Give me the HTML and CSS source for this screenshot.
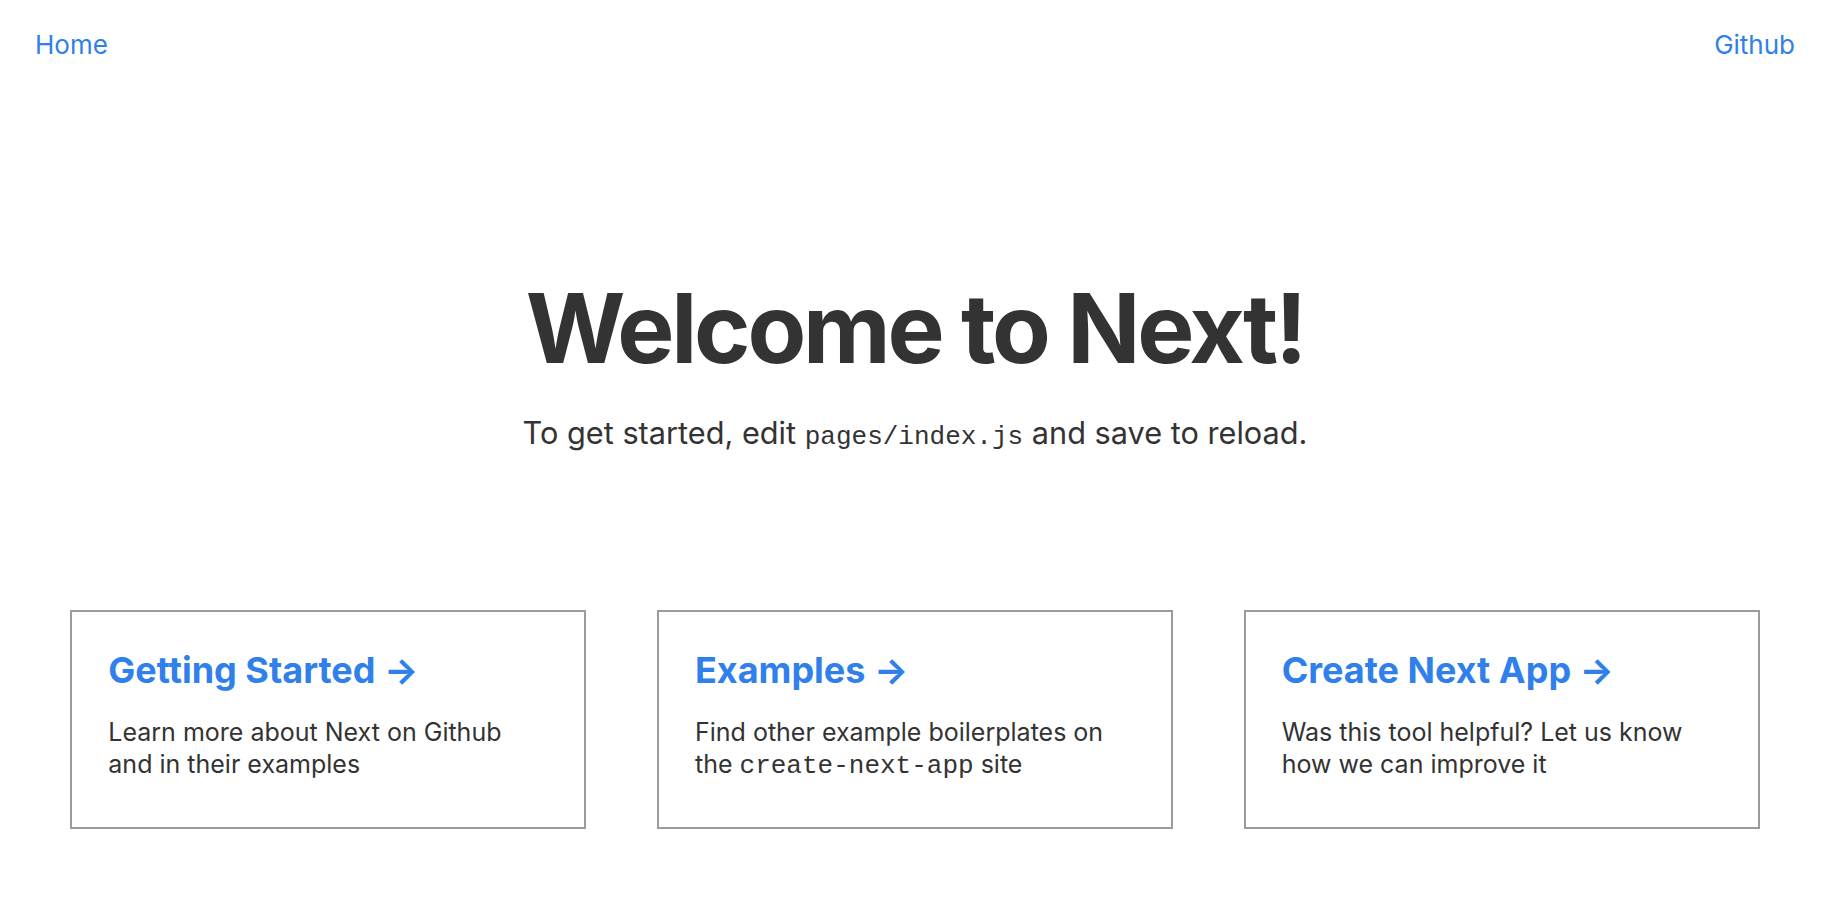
FILE: index.html
```html
<!DOCTYPE html>
<html lang="en">
<head>
  <meta charset="UTF-8" />
  <meta name="viewport" content="width=device-width, initial-scale=1.0" />
  <title>Home</title>
  <link rel="stylesheet" href="styles.css">
</head>
<body>
  <nav>
    <ul>
      <li><a href="/">Home</a></li>
      <li><a href="https://github.com/zeit/next.js">Github</a></li>
    </ul>
  </nav>

  <div class="hero">
    <h1 class="title">Welcome to Next!</h1>
    <p class="description">
      To get started, edit <code>pages/index.js</code> and save to reload.
    </p>

    <div class="row">
      <a href="https://github.com/zeit/next.js#getting-started" class="card">
        <h3>Getting Started &rarr;</h3>
        <p>Learn more about Next on Github and in their examples</p>
      </a>
      <a href="https://open.segment.com/create-next-app" class="card">
        <h3>Examples &rarr;</h3>
        <p>Find other example boilerplates on the <code>create-next-app</code> site</p>
      </a>
      <a href="https://github.com/segmentio/create-next-app" class="card">
        <h3>Create Next App &rarr;</h3>
        <p>Was this tool helpful? Let us know how we can improve it</p>
      </a>
    </div>
  </div>
</body>
</html>
```

FILE: styles.css
```css
body { margin: 0; font-family: Inter, "Noto Sans", sans-serif; background: #fff; }
nav ul { display: flex; justify-content: space-between; list-style: none; margin: 0; padding: 29px 35px 0; }
nav li { display: flex; }
a { color: #3080ec; text-decoration: none; font-size: 26px; line-height: 32px; }
code { font-family: "Liberation Mono", monospace; font-size: 26px; line-height: 1; }
.hero { width: 100%; color: #333; }
.title { margin: 212px 0 0; width: 100%; line-height: 1.15; font-size: 96px; font-weight: 700; letter-spacing: -3.2px; text-align: center; }
.description { margin: 32px 0 0; font-size: 30.7px; line-height: 36px; text-align: center; }
.row { max-width: 1760px; margin: 159px auto 80px; display: flex; justify-content: space-around; }
.card { width: 440px; padding: 36px 36px 47px; border: 2px solid #9b9b9b; text-align: left; color: #434343; }
.card h3 { margin: 0; font-size: 36px; line-height: 44px; font-weight: 700; color: #3080ec; }
.card p { margin: 0; padding: 24px 0 0; font-size: 25px; line-height: 32px; color: #333; }
```
